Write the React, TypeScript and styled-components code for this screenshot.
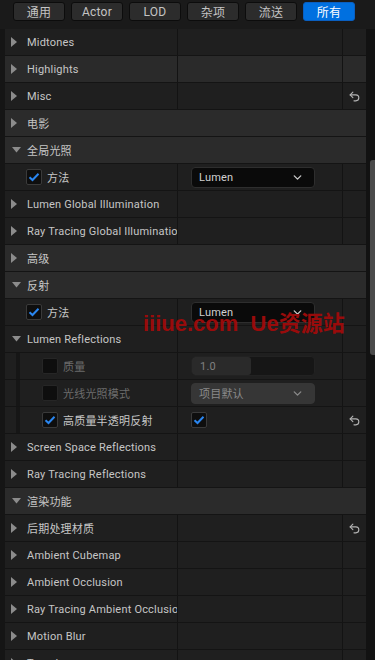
import React from "react";
import styled, { createGlobalStyle } from "styled-components";
import { ChevronDown, Undo2 } from "lucide-react";

const GlobalStyle = createGlobalStyle`
  html, body {
    margin: 0;
    padding: 0;
    background: #151515;
    font-family: Roboto, "Noto Sans CJK SC", sans-serif;
    overflow: hidden;
  }
`;

const Frame = styled.div`
  width: 375px;
  height: 660px;
  display: flex;
  flex-direction: column;
  background: #151515;
  position: relative;
  overflow: hidden;
`;

const TabBar = styled.div`
  height: 29px;
  flex: none;
  box-sizing: border-box;
  padding: 2px 0 0 13px;
  display: flex;
  gap: 6px;
  background: #1a1a1a;
`;

const TabButton = styled.div<{ $active?: boolean }>`
  width: 52px;
  height: 19px;
  box-sizing: border-box;
  border-radius: 3px;
  border: 1px solid ${(p) => (p.$active ? "#0a5fc0" : "#0c0c0c")};
  background: ${(p) => (p.$active ? "#0070e0" : "#2c2c2c")};
  color: ${(p) => (p.$active ? "#ffffff" : "#c4c4c4")};
  font-size: 12px;
  letter-spacing: 0.2px;
  display: flex;
  align-items: center;
  justify-content: center;
`;

const Body = styled.div`
  flex: 1;
  display: flex;
  min-height: 0;
`;

const List = styled.div`
  width: 361px;
  margin-left: 5px;
  display: flex;
  flex-direction: column;
`;

const ScrollTrack = styled.div`
  width: 9px;
  background: #121212;
  display: flex;
  flex-direction: column;
  align-items: flex-end;
`;

const ScrollThumb = styled.div`
  width: 5px;
  height: 195px;
  margin-top: 131px;
  border-radius: 3px 0 0 3px;
  background: #4a4a4a;
`;

const Row = styled.div<{ $tone: "category" | "light" | "dark" }>`
  height: 27px;
  flex: none;
  box-sizing: border-box;
  border-bottom: 1px solid #141414;
  display: flex;
  background: ${(p) =>
    p.$tone === "dark" ? "#1f1f1f" : p.$tone === "light" ? "#2a2a2a" : "#2b2b2b"};
  color: #c6c6c6;
  font-size: 11px;
  letter-spacing: 0.2px;
`;

const NameCell = styled.div<{ $full?: boolean; $indent: number }>`
  width: ${(p) => (p.$full ? "auto" : "173px")};
  flex: ${(p) => (p.$full ? "1" : "none")};
  box-sizing: border-box;
  padding-left: ${(p) => p.$indent}px;
  display: flex;
  align-items: center;
  overflow: hidden;
  white-space: nowrap;
  border-right: ${(p) => (p.$full ? "none" : "1px solid #131313")};
`;

const ValueCell = styled.div`
  width: 165px;
  box-sizing: border-box;
  padding-left: 13px;
  display: flex;
  align-items: center;
  border-right: 1px solid #131313;
`;

const ResetCell = styled.div`
  flex: 1;
  display: flex;
  align-items: center;
  justify-content: center;
  color: #b4b4b4;
`;

const Guide = styled.div`
  width: 4px;
  flex: none;
  align-self: stretch;
  background: #161616;
  margin-right: 22px;
`;

const Arrow = styled.div<{ $open?: boolean }>`
  width: 10px;
  flex: none;
  margin-right: 6px;
  display: flex;
  align-items: center;
  justify-content: ${(p) => (p.$open ? "center" : "flex-start")};
  color: #8c8c8c;
`;

const Label = styled.span<{ $dim?: boolean }>`
  flex: none;
  color: ${(p) => (p.$dim ? "#6c6c6c" : "#c6c6c6")};
`;

const CheckBox = styled.div<{ $dim?: boolean }>`
  width: 16px;
  height: 16px;
  box-sizing: border-box;
  border-radius: 2px;
  background: #0e0e0e;
  border: 1px solid ${(p) => (p.$dim ? "#262626" : "#3a3a3a")};
  display: flex;
  align-items: center;
  justify-content: center;
  margin-right: 5px;
  flex: none;
`;

const Select = styled.div<{ $disabled?: boolean }>`
  width: 124px;
  height: 21px;
  box-sizing: border-box;
  border-radius: 4px;
  background: ${(p) => (p.$disabled ? "#363636" : "#0a0a0a")};
  border: 1px solid ${(p) => (p.$disabled ? "#363636" : "#2e2e2e")};
  color: ${(p) => (p.$disabled ? "#8a8a8a" : "#d0d0d0")};
  display: flex;
  align-items: center;
  justify-content: space-between;
  padding: 0 10px 0 7px;
  font-size: 11px;
`;

const NumberBox = styled.div`
  width: 124px;
  height: 20px;
  box-sizing: border-box;
  border-radius: 4px;
  background: #161616;
  border: 1px solid #222222;
  display: flex;
  overflow: hidden;
`;

const NumberFill = styled.div`
  background: #2a2a2a;
  display: flex;
  align-items: center;
  padding-left: 8px;
  color: #808080;
  font-size: 11px;
  border-radius: 3px;
`;

const Watermark = styled.div`
  position: absolute;
  left: 143px;
  top: 305px;
  font-family: "Liberation Sans", "Noto Sans CJK SC", sans-serif;
  font-weight: bold;
  font-size: 22px;
  color: #990b0b;
  white-space: nowrap;
  pointer-events: none;
`;

function Tri({ open }: { open?: boolean }) {
  return (
    <Arrow $open={open}>
      {open ? (
        <svg width="9" height="6" viewBox="0 0 9 6">
          <path d="M0 0 H9 L4.5 5.5 Z" fill="currentColor" />
        </svg>
      ) : (
        <svg width="6" height="10" viewBox="0 0 6 10">
          <path d="M0 0 L6 5 L0 10 Z" fill="currentColor" />
        </svg>
      )}
    </Arrow>
  );
}

function Check({ on, dim }: { on?: boolean; dim?: boolean }) {
  return (
    <CheckBox $dim={dim}>
      {on && (
        <svg width="12" height="10" viewBox="0 0 12 10">
          <path d="M1.5 5.2 L4.5 8 L10.5 1.8" fill="none" stroke="#2a86f0" strokeWidth="2" />
        </svg>
      )}
    </CheckBox>
  );
}

type Item = {
  label: string;
  kind: "category" | "group" | "prop";
  open?: boolean;
  light?: boolean;
  depth?: number;
  check?: boolean;
  dim?: boolean;
  value?: React.ReactNode;
  reset?: boolean;
};

const lumenSelect = (
  <Select>
    Lumen <ChevronDown size={13} strokeWidth={2.5} color="#c8c8c8" />
  </Select>
);

const items: Item[] = [
  { label: "Midtones", kind: "group" },
  { label: "Highlights", kind: "group", light: true },
  { label: "Misc", kind: "group", reset: true },
  { label: "电影", kind: "category" },
  { label: "全局光照", kind: "category", open: true },
  { label: "方法", kind: "prop", depth: 1, check: true, value: lumenSelect },
  { label: "Lumen Global Illumination", kind: "group" },
  { label: "Ray Tracing Global Illumination", kind: "group" },
  { label: "高级", kind: "category" },
  { label: "反射", kind: "category", open: true },
  { label: "方法", kind: "prop", depth: 1, check: true, value: lumenSelect },
  { label: "Lumen Reflections", kind: "group", open: true },
  {
    label: "质量",
    kind: "prop",
    depth: 2,
    dim: true,
    value: (
      <NumberBox>
        <NumberFill style={{ width: "51px" }}>1.0</NumberFill>
      </NumberBox>
    ),
  },
  {
    label: "光线光照模式",
    kind: "prop",
    depth: 2,
    dim: true,
    value: (
      <Select $disabled>
        项目默认 <ChevronDown size={13} strokeWidth={2.5} color="#8a8a8a" />
      </Select>
    ),
  },
  { label: "高质量半透明反射", kind: "prop", depth: 2, check: true, value: <Check on />, reset: true },
  { label: "Screen Space Reflections", kind: "group" },
  { label: "Ray Tracing Reflections", kind: "group" },
  { label: "渲染功能", kind: "category", open: true },
  { label: "后期处理材质", kind: "group", reset: true },
  { label: "Ambient Cubemap", kind: "group" },
  { label: "Ambient Occlusion", kind: "group" },
  { label: "Ray Tracing Ambient Occlusion", kind: "group" },
  { label: "Motion Blur", kind: "group" },
  { label: "Translucency", kind: "group" },
];

function PropRow({ item }: { item: Item }) {
  if (item.kind === "category") {
    return (
      <Row $tone="category">
        <NameCell $full $indent={6}>
          <Tri open={item.open} />
          <Label>{item.label}</Label>
        </NameCell>
      </Row>
    );
  }
  const deep = item.depth === 2;
  return (
    <Row $tone={item.light ? "light" : "dark"}>
      <NameCell $indent={item.kind === "group" ? 6 : deep ? 11 : 21}>
        {deep && <Guide />}
        {item.kind === "group" ? (
          <Tri open={item.open} />
        ) : (
          <Check on={item.check} dim={item.dim} />
        )}
        <Label $dim={item.dim}>{item.label}</Label>
      </NameCell>
      <ValueCell>{item.value}</ValueCell>
      <ResetCell>{item.reset && <Undo2 size={13} strokeWidth={2} />}</ResetCell>
    </Row>
  );
}

export default function App() {
  const tabs = ["通用", "Actor", "LOD", "杂项", "流送", "所有"];
  return (
    <Frame>
      <GlobalStyle />
      <TabBar>
        {tabs.map((t) => (
          <TabButton key={t} $active={t === "所有"}>
            {t}
          </TabButton>
        ))}
      </TabBar>
      <Body>
        <List>
          {items.map((item, i) => (
            <PropRow key={i} item={item} />
          ))}
        </List>
        <ScrollTrack>
          <ScrollThumb />
        </ScrollTrack>
      </Body>
      <Watermark>iiiue.com&nbsp; Ue资源站</Watermark>
    </Frame>
  );
}
